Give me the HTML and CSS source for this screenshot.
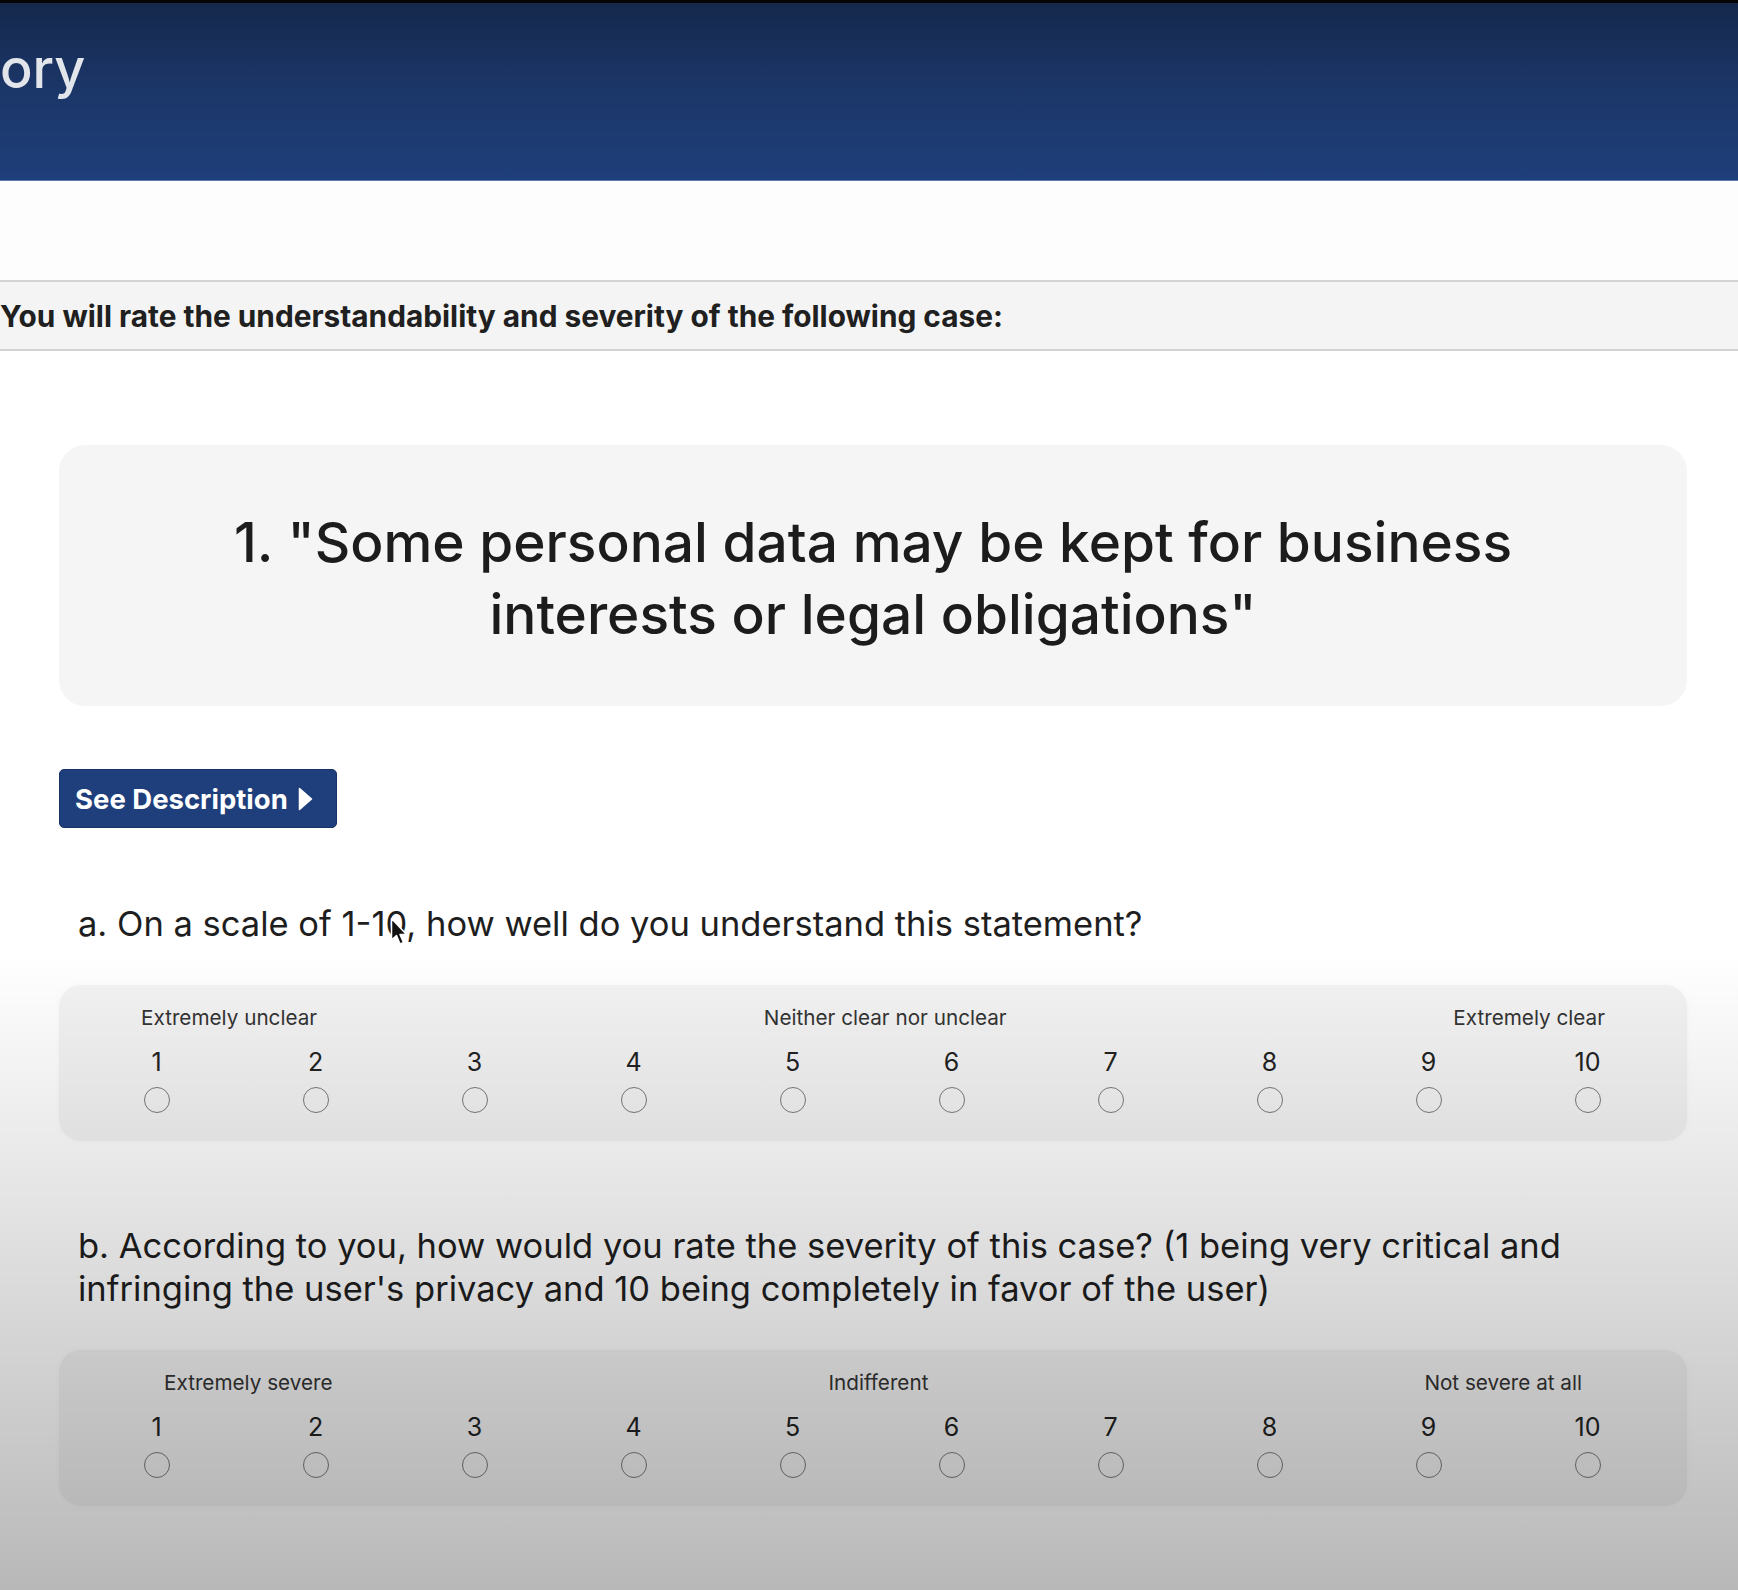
FILE: index.html
```html
<!DOCTYPE html>
<html lang="en">
<head>
<meta charset="utf-8">
<title>Survey</title>
<link rel="stylesheet" href="styles.css">
</head>
<body>
<header class="topbar">
  <h1 class="topbar-title">ory</h1>
</header>
<div class="gap-white"></div>
<div class="instruction"><span>You will rate the understandability and severity of the following case:</span></div>

<main class="content">
  <section class="statement-card">
    <h2 class="statement">1. "Some personal data may be kept for business interests or legal obligations"</h2>
  </section>

  <button class="desc-btn" type="button"><span>See Description</span>
    <svg class="desc-caret" width="15" height="24" viewBox="0 0 15 24"><path d="M1.5 1.5 L13.5 12 L1.5 22.5 Z" fill="#fff" stroke="#fff" stroke-width="1.5" stroke-linejoin="round"/></svg>
  </button>

  <p class="question q-a">a. On a scale of 1-10, how well do you understand this statement?</p>

  <div class="scale-card">
    <div class="scale-labels labels-clear">
      <span>Extremely unclear</span>
      <span>Neither clear nor unclear</span>
      <span>Extremely clear</span>
    </div>
    <div class="scale-grid">
      <label class="opt"><span class="num">1</span><input type="radio" name="qa"></label>
      <label class="opt"><span class="num">2</span><input type="radio" name="qa"></label>
      <label class="opt"><span class="num">3</span><input type="radio" name="qa"></label>
      <label class="opt"><span class="num">4</span><input type="radio" name="qa"></label>
      <label class="opt"><span class="num">5</span><input type="radio" name="qa"></label>
      <label class="opt"><span class="num">6</span><input type="radio" name="qa"></label>
      <label class="opt"><span class="num">7</span><input type="radio" name="qa"></label>
      <label class="opt"><span class="num">8</span><input type="radio" name="qa"></label>
      <label class="opt"><span class="num">9</span><input type="radio" name="qa"></label>
      <label class="opt"><span class="num">10</span><input type="radio" name="qa"></label>
    </div>
  </div>

  <p class="question q-b">b. According to you, how would you rate the severity of this case? (1 being very critical and infringing the user's privacy and 10 being completely in favor of the user)</p>

  <div class="scale-card">
    <div class="scale-labels labels-severe">
      <span>Extremely severe</span>
      <span>Indifferent</span>
      <span>Not severe at all</span>
    </div>
    <div class="scale-grid">
      <label class="opt"><span class="num">1</span><input type="radio" name="qb"></label>
      <label class="opt"><span class="num">2</span><input type="radio" name="qb"></label>
      <label class="opt"><span class="num">3</span><input type="radio" name="qb"></label>
      <label class="opt"><span class="num">4</span><input type="radio" name="qb"></label>
      <label class="opt"><span class="num">5</span><input type="radio" name="qb"></label>
      <label class="opt"><span class="num">6</span><input type="radio" name="qb"></label>
      <label class="opt"><span class="num">7</span><input type="radio" name="qb"></label>
      <label class="opt"><span class="num">8</span><input type="radio" name="qb"></label>
      <label class="opt"><span class="num">9</span><input type="radio" name="qb"></label>
      <label class="opt"><span class="num">10</span><input type="radio" name="qb"></label>
    </div>
  </div>
</main>

<svg class="cursor" width="20" height="30" viewBox="0 0 20 30"><path d="M1.5 1.5 L1.5 23 L6.5 18.5 L10 27 L13.5 25.5 L10 17.5 L16.5 17.5 Z" fill="#111" stroke="#fff" stroke-width="1.5" stroke-linejoin="round"/></svg>
<div class="vignette"></div>
</body>
</html>
```

FILE: styles.css
```css
* { box-sizing: border-box; }
html, body { margin: 0; padding: 0; }
body {
  width: 1738px;
  min-height: 1590px;
  background: #ffffff;
  font-family: Inter, "Liberation Sans", Arial, sans-serif;
  color: #1e1e1e;
  overflow: hidden;
  position: relative;
}

.topbar {
  height: 181px;
  border-top: 3px solid #050505;
  background: linear-gradient(to bottom, #15284c 0%, #1b3566 45%, #1f3f7b 100%);
  border-bottom: 1px solid #6079b0;
  padding-top: 31px;
  overflow: hidden;
}
.topbar-title {
  margin: 0;
  font-size: 54px;
  font-weight: 500;
  line-height: 70px;
  color: #e2e5ea;
}

.gap-white { height: 99px; background: #fdfdfd; }

.instruction {
  height: 71px;
  border-top: 2px solid #d3d3d3;
  border-bottom: 2px solid #d3d3d3;
  background: #f4f4f4;
  display: flex;
  align-items: center;
  font-size: 29.8px;
  font-weight: 700;
  color: #202020;
}

.content {
  padding: 0 51px 0 59px;
  display: flex;
  flex-direction: column;
  align-items: flex-start;
}

.statement-card {
  align-self: stretch;
  margin-top: 94px;
  height: 261px;
  border-radius: 26px;
  background: #f5f5f6;
  padding-top: 61px;
  text-align: center;
}
.statement {
  margin: 0 auto;
  max-width: 1400px;
  font-size: 55px;
  font-weight: 500;
  line-height: 72px;
  color: #1c1c1c;
}

.desc-btn {
  margin-top: 63px;
  height: 59px;
  width: 278px;
  border: 1px solid #173266;
  border-radius: 5px;
  background: #1f3f7c;
  color: #fff;
  font-family: inherit;
  font-size: 27.5px;
  font-weight: 700;
  display: flex;
  align-items: center;
  gap: 10px;
  padding: 0 0 0 15px;
}
.desc-caret { flex: none; }

.question {
  margin: 0;
  padding-left: 19px;
  font-size: 34.5px;
  line-height: 43px;
  color: #1e1e1e;
}
.q-a { margin-top: 74px; }
.q-b { margin-top: 83px; }

.scale-card {
  align-self: stretch;
  margin-top: 40px;
  height: 156px;
  border-radius: 22px;
  background: #f3f3f3;
  padding: 20px 20px 0 18px;
  box-shadow: 0 0 6px rgba(0,0,0,0.03);
}
.scale-labels {
  display: flex;
  justify-content: space-between;
  font-size: 20.7px;
  line-height: 26px;
  color: #333;
}
.labels-clear { padding: 0 62px 0 64px; }
.labels-severe { padding: 0 85px 0 87px; }

.scale-grid {
  display: grid;
  grid-template-columns: repeat(10, 1fr);
  margin-top: 16px;
}
.opt {
  display: flex;
  flex-direction: column;
  align-items: center;
}
.num {
  font-size: 25px;
  line-height: 30px;
  color: #222;
}
.opt input {
  appearance: none;
  -webkit-appearance: none;
  margin: 10px 0 0 0;
  width: 26px;
  height: 26px;
  border: 1.5px solid #7a7a7a;
  border-radius: 50%;
  background: transparent;
}

.cursor {
  position: absolute;
  left: 390px;
  top: 917px;
}

.vignette {
  position: absolute;
  left: 0; top: 0;
  width: 1738px;
  height: 1590px;
  pointer-events: none;
  background: linear-gradient(to bottom, rgba(0,0,0,0) 0%, rgba(0,0,0,0) 60%, rgba(0,0,0,0.11) 76%, rgba(0,0,0,0.28) 100%);
}
```
